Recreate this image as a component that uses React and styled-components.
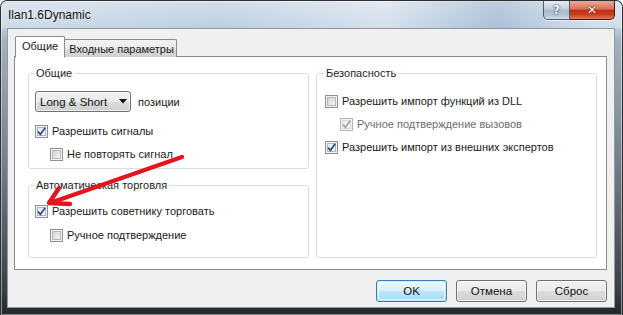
import React from "react";
import styled, { createGlobalStyle, css } from "styled-components";

const GlobalStyle = createGlobalStyle`
	html,
	body {
		margin: 0;
		padding: 0;
		background: #ffffff;
	}

	body {
		font-family: "Liberation Sans", Arial, sans-serif;
		font-size: 11px;
		color: #1a1a1a;
	}
`;

const Window = styled.div`
	position: relative;
	box-sizing: border-box;
	width: 623px;
	height: 315px;
	display: flex;
	flex-direction: column;
	border: 1px solid #2c2f33;
	border-bottom: 0;
	border-radius: 7px 7px 0 0;
	background: linear-gradient(
		180deg,
		#d3dee9 0px,
		#bccee2 27px,
		#a3b1c0 40px,
		#767f8a 160px,
		#3a3f45 290px,
		#212428 315px
	);
	box-shadow: inset 0 0 0 1px rgba(255, 255, 255, 0.45);
	overflow: hidden;
`;

const TitleBar = styled.div`
	display: flex;
	align-items: flex-start;
	height: 27px;
	padding-left: 7px;
	padding-right: 7px;
	background: linear-gradient(
		90deg,
		rgba(255, 255, 255, 0.25) 0%,
		rgba(255, 255, 255, 0) 35%,
		rgba(255, 255, 255, 0.35) 62%,
		rgba(120, 150, 185, 0.25) 80%,
		rgba(255, 255, 255, 0.3) 95%
	);
`;

const Title = styled.div`
	flex: 1;
	margin-top: 6px;
	font-size: 12px;
	line-height: 16px;
	color: #111;
	text-shadow: 0 0 6px rgba(255, 255, 255, 0.9);
`;

const CaptionButtons = styled.div`
	display: flex;
	box-shadow: 0 1px 0 rgba(255, 255, 255, 0.6);
	border-radius: 0 0 5px 5px;
`;

const CaptionButton = styled.div`
	box-sizing: border-box;
	height: 19px;
	display: flex;
	align-items: center;
	justify-content: center;
	font-family: "DejaVu Sans", sans-serif;
	font-weight: bold;
	color: #ffffff;
	border: 1px solid #4e5a66;
	border-top: 0;
	${(p) =>
		p.$close
			? css`
					width: 45px;
					border-left: 0;
					border-color: #4a1a12;
					border-radius: 0 0 5px 0;
					font-size: 12px;
					background: linear-gradient(
						180deg,
						#e9a99a 0%,
						#d96f57 45%,
						#c32f15 52%,
						#c93f22 75%,
						#e17a5c 100%
					);
					text-shadow: 0 0 2px #5a130a, 0 0 1px #5a130a;
			  `
			: css`
					width: 27px;
					border-radius: 0 0 0 5px;
					font-size: 12px;
					background: linear-gradient(
						180deg,
						#e4ebf3 0%,
						#c3d0de 45%,
						#a8b9cc 52%,
						#b4c5d8 80%,
						#d3dfeb 100%
					);
					text-shadow: 0 0 2px #2b3542, 0 0 1px #2b3542;
			  `}
`;

const Client = styled.div`
	display: flex;
	flex-direction: column;
	margin: 0 7px 0 6px;
	padding: 7px 7px 5px 6px;
	border: 1px solid #8f9aa6;
	background: #f0f0f0;
`;

const TabStrip = styled.div`
	display: flex;
	align-items: flex-end;
	padding-left: 1px;
	height: 21px;
`;

const Tab = styled.div`
	position: relative;
	box-sizing: border-box;
	display: flex;
	align-items: center;
	border: 1px solid #898c95;
	border-radius: 2px 2px 0 0;
	white-space: nowrap;
	${(p) =>
		p.$active
			? css`
					height: 22px;
					margin-bottom: -1px;
					padding: 0 6px 2px;
					background: #ffffff;
					border-bottom-color: #ffffff;
					z-index: 1;
			  `
			: css`
					height: 18px;
					margin-left: -1px;
					padding: 0 2px 0 4px;
					background: linear-gradient(
						180deg,
						#f3f3f3 0%,
						#ebebeb 50%,
						#dddddd 51%,
						#cfcfcf 100%
					);
					border-bottom: 0;
			  `}
`;

const Panel = styled.div`
	box-sizing: border-box;
	height: 214px;
	margin-top: -1px;
	padding: 9px 9px 11px 13px;
	border: 1px solid #898c95;
	background: #ffffff;
	display: grid;
	grid-template-columns: 281px 281px;
	column-gap: 7px;
`;

const Column = styled.div`
	display: flex;
	flex-direction: column;
	gap: 9px;
`;

const Group = styled.fieldset`
	box-sizing: border-box;
	margin: 0;
	min-width: 0;
	display: flex;
	flex-direction: column;
	gap: ${(p) => p.$gap || 7}px;
	padding: ${(p) => p.$pad || "0 7px 7px 6px"};
	border: 1px solid #d5dfe5;
	border-radius: 3px;
	${(p) => p.$grow && "flex: 1;"}
`;

const Legend = styled.legend`
	margin-left: -1px;
	padding: 0 2px;
	line-height: 14px;
	color: #1e1e1e;
`;

const Row = styled.div`
	display: flex;
	align-items: center;
	gap: 7px;
	height: 21px;
	margin-bottom: 4px;
`;

const Select = styled.div`
	box-sizing: border-box;
	width: 96px;
	height: 21px;
	display: flex;
	align-items: center;
	justify-content: space-between;
	padding: 0 3px 0 4px;
	border: 1px solid #707070;
	border-radius: 3px;
	background: linear-gradient(
		180deg,
		#f2f2f2 0%,
		#ebebeb 50%,
		#dddddd 51%,
		#cfcfcf 100%
	);
	box-shadow: inset 0 0 0 1px rgba(255, 255, 255, 0.7);
	font-size: 11.5px;
	color: #111;
`;

const CheckRow = styled.label`
	display: flex;
	align-items: center;
	gap: 4px;
	height: 16px;
	padding-left: ${(p) => (p.$indent ? 15 : 0)}px;
	color: ${(p) => (p.$disabled ? "#6d6d6d" : "#1a1a1a")};
	white-space: nowrap;
`;

const Box = styled.span`
	box-sizing: border-box;
	width: 13px;
	height: 13px;
	flex: none;
	display: flex;
	align-items: center;
	justify-content: center;
	border: 1px solid ${(p) => (p.$disabled ? "#b6b6b6" : "#8e8f8f")};
	background: #ffffff;
	box-shadow: inset 0 0 0 1px #f4f4f4;

	svg {
		display: block;
	}
`;

const BoxInner = styled.span`
	box-sizing: border-box;
	width: 9px;
	height: 9px;
	display: flex;
	align-items: center;
	justify-content: center;
	border: 1px solid ${(p) => (p.$disabled ? "#d8d8d8" : "#b3b8be")};
	background: ${(p) =>
		p.$checked
			? "linear-gradient(135deg, #e9ecef, #fbfbfb)"
			: "linear-gradient(135deg, #cfd3d8, #f4f5f6)"};
	overflow: visible;
`;

const ButtonRow = styled.div`
	display: flex;
	justify-content: flex-end;
	gap: 9px;
	margin-top: 10px;
`;

const Button = styled.div`
	box-sizing: border-box;
	width: 71px;
	height: 22px;
	display: flex;
	align-items: center;
	justify-content: center;
	border-radius: 3px;
	font-size: 11.5px;
	color: #111;
	${(p) =>
		p.$default
			? css`
					border: 1px solid #3c7fb1;
					background: linear-gradient(
						180deg,
						#eaf6fd 0%,
						#d9f0fc 50%,
						#bee6fd 51%,
						#a7d9f5 100%
					);
					box-shadow: inset 0 0 0 1px #48d4fd55, inset 0 0 0 2px #ffffffaa;
			  `
			: css`
					border: 1px solid #707070;
					background: linear-gradient(
						180deg,
						#f2f2f2 0%,
						#ebebeb 50%,
						#dddddd 51%,
						#cfcfcf 100%
					);
					box-shadow: inset 0 0 0 1px rgba(255, 255, 255, 0.75);
			  `}
`;

const Overlay = styled.svg`
	position: absolute;
	left: -1px;
	top: -1px;
	pointer-events: none;
`;

const Checkbox = ({ checked, disabled, indent, children }) => (
	<CheckRow $indent={indent} $disabled={disabled}>
		<Box $disabled={disabled}>
			<BoxInner $checked={checked} $disabled={disabled}>
				{checked && (
					<svg width="11" height="11" viewBox="0 0 11 11" style={{ margin: -2 }}>
						<path
							d="M2 5.6 L4.4 8.3 L9.2 1.8"
							fill="none"
							stroke={disabled ? "#a2a2a2" : "#2f4a8c"}
							strokeWidth="1.7"
						/>
					</svg>
				)}
			</BoxInner>
		</Box>
		{children}
	</CheckRow>
);

const ArrowDown = () => (
	<svg width="8" height="5" viewBox="0 0 8 5">
		<path d="M0 0 H8 L4 4.5 Z" fill="#111" />
	</svg>
);

export default function App() {
	return (
		<>
			<GlobalStyle />
			<Window>
				<TitleBar>
					<Title>Ilan1.6Dynamic</Title>
					<CaptionButtons>
						<CaptionButton>?</CaptionButton>
						<CaptionButton $close>✕</CaptionButton>
					</CaptionButtons>
				</TitleBar>
				<Client>
					<TabStrip>
						<Tab $active>Общие</Tab>
						<Tab>Входные параметры</Tab>
					</TabStrip>
					<Panel>
						<Column>
							<Group $pad="11px 7px 6px 6px" $gap={7}>
								<Legend>Общие</Legend>
								<Row>
									<Select>
										<span>Long &amp; Short</span>
										<ArrowDown />
									</Select>
									<span>позиции</span>
								</Row>
								<Checkbox checked>Разрешить сигналы</Checkbox>
								<Checkbox indent>Не повторять сигнал</Checkbox>
							</Group>
							<Group $grow $pad="11px 7px 7px 6px" $gap={8}>
								<Legend>Автоматическая торговля</Legend>
								<Checkbox checked>Разрешить советнику торговать</Checkbox>
								<Checkbox indent>Ручное подтверждение</Checkbox>
							</Group>
						</Column>
						<Group $pad="13px 7px 7px 8px" $gap={7}>
							<Legend>Безопасность</Legend>
							<Checkbox>Разрешить импорт функций из DLL</Checkbox>
							<Checkbox checked disabled indent>
								Ручное подтверждение вызовов
							</Checkbox>
							<Checkbox checked>Разрешить импорт из внешних экспертов</Checkbox>
						</Group>
					</Panel>
					<ButtonRow>
						<Button $default>OK</Button>
						<Button>Отмена</Button>
						<Button>Сброс</Button>
					</ButtonRow>
				</Client>
				<Overlay width="623" height="315" viewBox="0 0 623 315">
					<g
						fill="none"
						stroke="#e3151f"
						strokeWidth="4.5"
						strokeLinecap="round"
						strokeLinejoin="round"
					>
						<path d="M182 157 L50 203" />
						<path d="M59 188 L49 203 L70 204" />
					</g>
				</Overlay>
			</Window>
		</>
	);
}
